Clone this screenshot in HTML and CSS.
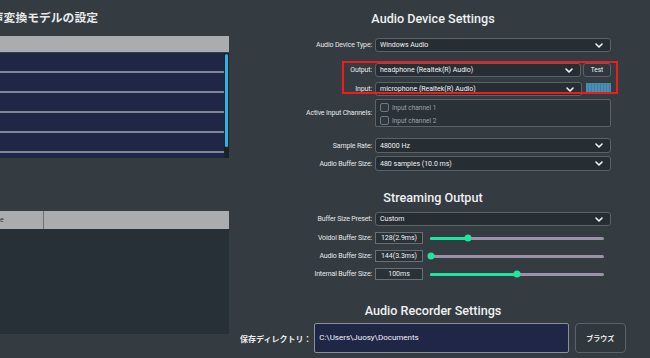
FILE: index.html
```html
<!DOCTYPE html>
<html lang="ja">
<head>
  <meta charset="UTF-8">
  <meta name="viewport" content="width=device-width, initial-scale=1.0">
  <title>Audio Settings</title>
  <link rel="stylesheet" href="styles.css">
</head>
<body>
  <div class="app">
    <!-- Left: model settings -->
    <section class="model-panel">
      <h2 class="panel-title">音声変換モデルの設定</h2>
      <div class="model-table">
        <div class="table-head"></div>
        <div class="table-body">
          <div class="table-rows">
            <div class="table-row"></div>
            <div class="table-row"></div>
            <div class="table-row"></div>
            <div class="table-row"></div>
            <div class="table-row"></div>
            <div class="table-row"></div>
          </div>
          <div class="scrollbar"><div class="scroll-thumb"></div></div>
        </div>
      </div>
      <div class="param-table">
        <div class="param-head">
          <div class="head-cell head-cell--name"><span>Name</span></div>
          <div class="head-cell"></div>
        </div>
        <div class="param-body"></div>
      </div>
    </section>

    <!-- Right: audio settings -->
    <section class="settings-panel">
      <div class="highlight"></div>

      <h2 class="section-title section-title--first">Audio Device Settings</h2>
      <div class="form-row">
        <label class="form-label">Audio Device Type:</label>
        <div class="select"><span class="select-text">Windows Audio</span><svg class="chevron" viewBox="0 0 8 5"><path d="M1 1l3 3 3-3"/></svg></div>
      </div>
      <div class="form-row form-row--spaced">
        <label class="form-label">Output:</label>
        <div class="device-control">
          <div class="select"><span class="select-text">headphone (Realtek(R) Audio)</span><svg class="chevron" viewBox="0 0 8 5"><path d="M1 1l3 3 3-3"/></svg></div>
          <button class="test-button">Test</button>
        </div>
      </div>
      <div class="form-row">
        <label class="form-label">Input:</label>
        <div class="device-control device-control--input">
          <div class="select"><span class="select-text">microphone (Realtek(R) Audio)</span><svg class="chevron" viewBox="0 0 8 5"><path d="M1 1l3 3 3-3"/></svg></div>
          <div class="level-meter"></div>
        </div>
      </div>
      <div class="form-row form-row--tight">
        <label class="form-label">Active Input Channels:</label>
        <div class="channel-box">
          <div class="channel"><span class="checkbox"></span>Input channel 1</div>
          <div class="channel"><span class="checkbox"></span>Input channel 2</div>
        </div>
      </div>
      <div class="form-row form-row--spaced">
        <label class="form-label">Sample Rate:</label>
        <div class="select select--tall"><span class="select-text">48000 Hz</span><svg class="chevron" viewBox="0 0 8 5"><path d="M1 1l3 3 3-3"/></svg></div>
      </div>
      <div class="form-row form-row--tight">
        <label class="form-label">Audio Buffer Size:</label>
        <div class="select select--tall"><span class="select-text">480 samples (10.0 ms)</span><svg class="chevron" viewBox="0 0 8 5"><path d="M1 1l3 3 3-3"/></svg></div>
      </div>

      <h2 class="section-title">Streaming Output</h2>
      <div class="form-row">
        <label class="form-label">Buffer Size Preset:</label>
        <div class="select"><span class="select-text">Custom</span><svg class="chevron" viewBox="0 0 8 5"><path d="M1 1l3 3 3-3"/></svg></div>
      </div>
      <div class="form-row form-row--slider">
        <label class="form-label">Voidol Buffer Size:</label>
        <div class="slider-control">
          <div class="value-box">128(2.9ms)</div>
          <div class="slider"><div class="slider-fill" style="width: 22%"></div><div class="slider-knob" style="left: 22%"></div></div>
        </div>
      </div>
      <div class="form-row form-row--slider">
        <label class="form-label">Audio Buffer Size:</label>
        <div class="slider-control">
          <div class="value-box">144(3.3ms)</div>
          <div class="slider"><div class="slider-fill" style="width: 0%"></div><div class="slider-knob" style="left: 0.6%"></div></div>
        </div>
      </div>
      <div class="form-row form-row--slider">
        <label class="form-label">Internal Buffer Size:</label>
        <div class="slider-control">
          <div class="value-box">100ms</div>
          <div class="slider"><div class="slider-fill" style="width: 50%"></div><div class="slider-knob" style="left: 50%"></div></div>
        </div>
      </div>

      <h2 class="section-title section-title--recorder">Audio Recorder Settings</h2>
      <div class="dir-row">
        <label class="dir-label">保存ディレクトリ：</label>
        <div class="dir-input">C:\Users\Juosy\Documents</div>
        <button class="browse-button">ブラウズ</button>
      </div>
    </section>
  </div>
</body>
</html>
```

FILE: styles.css
```css
body {
  margin: 0;
  width: 650px;
  height: 358px;
  overflow: hidden;
  background: #343c42;
  font-family: Roboto, "Noto Sans CJK JP", sans-serif;
  color: #e8eaeb;
}

.app {
  display: flex;
  height: 100%;
}

/* Left panel */
.model-panel {
  width: 229px;
  flex-shrink: 0;
  overflow: hidden;
}

.panel-title {
  margin: 8px 0 0 -20px;
  font-family: "Noto Sans CJK JP", sans-serif;
  font-size: 11.8px;
  line-height: 18px;
  font-weight: 700;
  white-space: nowrap;
  color: #e6e8e9;
}

.model-table {
  margin-top: 10px;
}

.table-head {
  height: 16px;
  background: #a9adb0;
  border-bottom: 1px solid #3a4146;
}

.table-body {
  display: flex;
  height: 105px;
}

.table-rows {
  flex-grow: 1;
  overflow: hidden;
  background: #1f2646;
}

.table-row {
  height: 18px;
  border-bottom: 2px solid #7f8698;
}

.scrollbar {
  width: 4px;
  padding-left: 1px;
  background: #1c2125;
}

.scroll-thumb {
  width: 3px;
  height: 93px;
  margin-top: 1px;
  background: #2fb2ea;
  border-radius: 2px;
}

.param-table {
  margin-top: 53px;
}

.param-head {
  display: flex;
  height: 18px;
  background: #a9adb0;
}

.head-cell {
  flex-grow: 1;
}

.head-cell--name {
  flex: 0 0 43px;
  border-right: 1px solid #6c7176;
  overflow: hidden;
  font-size: 7px;
  line-height: 18px;
  color: #2e3338;
}

.head-cell--name span {
  margin-left: -15px;
}

.param-body {
  height: 105px;
  background: #263036;
}

/* Right panel */
.settings-panel {
  position: relative;
  width: 386px;
  margin-left: 11px;
  display: flex;
  flex-direction: column;
}

.highlight {
  position: absolute;
  left: 102px;
  top: 61px;
  width: 276px;
  height: 33px;
  box-sizing: border-box;
  border: 2px solid #f01c1c;
}

.section-title {
  margin: 17px 0 -1px;
  text-align: center;
  font-size: 12.6px;
  line-height: 20px;
  font-weight: 500;
  color: #eef0f1;
}

.section-title--first {
  margin-top: 9px;
  margin-bottom: 4px;
}

.section-title--recorder {
  margin-top: 21px;
}

.form-row {
  display: grid;
  grid-template-columns: 132px 236px;
  column-gap: 3px;
  align-items: center;
  margin-top: 5px;
}

.form-row--spaced {
  margin-top: 11px;
}

.form-row--tight {
  margin-top: 3px;
}

.form-row--slider {
  margin-top: 6px;
  height: 12px;
}

.form-label {
  text-align: right;
  font-size: 7px;
  letter-spacing: -0.15px;
  white-space: nowrap;
  color: #e4e6e8;
}

.select {
  display: flex;
  align-items: center;
  height: 14px;
  box-sizing: border-box;
  padding: 0 7px 0 4px;
  border: 1px solid #5b6369;
  border-radius: 3px;
  background: #262d33;
  font-size: 7px;
  color: #f0f2f3;
}

.select--tall {
  height: 15px;
}

.select-text {
  flex-grow: 1;
  white-space: nowrap;
}

.chevron {
  width: 8px;
  height: 5px;
  fill: none;
  stroke: #f4f5f6;
  stroke-width: 1.6;
  stroke-linecap: round;
  stroke-linejoin: round;
}

.device-control {
  display: flex;
  gap: 2px;
}

.device-control .select {
  flex-grow: 1;
}

.device-control--input {
  gap: 4px;
}

.test-button {
  width: 28px;
  height: 14px;
  padding: 0;
  border: 1px solid #5b6369;
  border-radius: 3px;
  background: #2f373d;
  font-family: Roboto, sans-serif;
  font-size: 6.5px;
  color: #f0f2f3;
}

.level-meter {
  align-self: flex-start;
  width: 25px;
  height: 9px;
  margin-top: 1px;
  background: repeating-linear-gradient(90deg, #4a8fb2 0 2px, #3f7fa0 2px 3px);
}

.channel-box {
  display: flex;
  flex-direction: column;
  gap: 4px;
  height: 28px;
  box-sizing: border-box;
  padding: 3px 4px 0;
  border: 1px solid #5b6369;
  border-radius: 2px;
  background: #2a3238;
}

.channel {
  display: flex;
  align-items: center;
  gap: 3px;
  height: 9px;
  font-size: 6.5px;
  color: #9ca3a8;
}

.checkbox {
  width: 9px;
  height: 9px;
  box-sizing: border-box;
  border: 1px solid #6f787e;
  border-radius: 2px;
  background: #30383e;
}

.slider-control {
  display: flex;
  align-items: center;
  gap: 7px;
}

.value-box {
  width: 48px;
  height: 12px;
  box-sizing: border-box;
  border: 1px solid #687076;
  background: #2a3238;
  text-align: center;
  font-size: 7px;
  line-height: 10px;
  color: #eef0f1;
}

.slider {
  position: relative;
  width: 174px;
  height: 3px;
  border-radius: 2px;
  background: #9b91a9;
}

.slider-fill {
  height: 100%;
  border-radius: 2px;
  background: #1ee69c;
}

.slider-knob {
  position: absolute;
  top: 50%;
  width: 7px;
  height: 7px;
  border-radius: 50%;
  background: #1ee69c;
  transform: translate(-50%, -50%);
}

.dir-row {
  display: flex;
  align-items: center;
  margin-top: 3px;
  height: 30px;
}

.dir-label {
  width: 75px;
  font-size: 8px;
  font-weight: 700;
  white-space: nowrap;
  color: #eceeef;
}

.dir-input {
  width: 257px;
  height: 30px;
  box-sizing: border-box;
  padding-left: 4px;
  border: 1px solid #8a9096;
  border-radius: 2px;
  background: #1f2646;
  font-size: 8px;
  line-height: 28px;
  color: #f2f4f5;
}

.browse-button {
  width: 52px;
  height: 30px;
  margin-left: 6px;
  padding: 0;
  border: 1px solid #5a6268;
  border-radius: 4px;
  background: #30383e;
  font-family: "Noto Sans CJK JP", sans-serif;
  font-size: 7px;
  font-weight: 700;
  color: #eceeef;
}
```
